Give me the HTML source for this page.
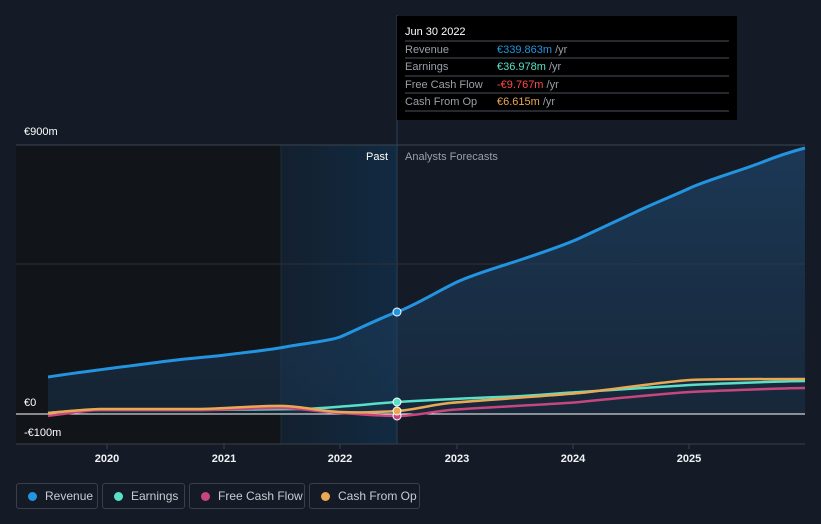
<!DOCTYPE html>
<html><head><style>
body{margin:0;background:#151b26;width:821px;height:524px;overflow:hidden;font-family:"Liberation Sans",sans-serif}
.lg{position:absolute;top:483px;height:26px;border:1px solid #3a404a;border-radius:3px;box-sizing:border-box;color:#c8ccd2;font-size:12px;line-height:24px}
.lg i{position:absolute;left:11px;top:8px;width:9px;height:9px;border-radius:50%}
.lg span{position:absolute;left:28px}
</style></head><body>
<svg width="821" height="524" style="position:absolute;left:0;top:0">
<defs>
<linearGradient id="hl" x1="0" x2="1"><stop offset="0" stop-color="#13202e"/><stop offset="1" stop-color="#122a42"/></linearGradient>
<linearGradient id="fa" x1="0" y1="0" x2="0" y2="1"><stop offset="0" stop-color="#1e4266" stop-opacity="0.75"/><stop offset="1" stop-color="#1b3a58" stop-opacity="0.4"/></linearGradient>
</defs>
<rect x="16" y="145" width="265" height="299" fill="#111419"/>
<rect x="281" y="145" width="116" height="299" fill="url(#hl)"/>
<line x1="281" y1="145" x2="281" y2="444" stroke="#1f2c3a"/>
<line x1="397" y1="15" x2="397" y2="444" stroke="#2a3f55"/>
<line x1="16" y1="145" x2="805" y2="145" stroke="#3a4452"/>
<line x1="16" y1="264" x2="805" y2="264" stroke="#2a323d"/>
<path d="M48,377 C80,372 130,366 160,362 S210,357 225,355 S270,350 285,347 S330,341 340,337 S380,318 397,312 S440,290 457,282 S505,265 520,260 S565,245 580,238 S625,217 640,210 S675,195 690,188 S745,169 760,163 S790,152 805,148 L805,414 L48,414Z" fill="url(#fa)"/>
<path d="M48,377 C80,372 130,366 160,362 S210,357 225,355 S270,350 285,347 S330,341 340,337 S380,318 397,312 S440,290 457,282 S505,265 520,260 S565,245 580,238 S625,217 640,210 S675,195 690,188 S745,169 760,163 S790,152 805,148" fill="none" stroke="#2394e0" stroke-width="3"/>
<line x1="16" y1="414" x2="805" y2="414" stroke="#ffffff" stroke-width="1"/>
<line x1="16" y1="444" x2="805" y2="444" stroke="#3a404a"/>
<path d="M48,413 C70,411 90,410 100,410 S180,410 200,410 S280,409 300,409 S380,403 397,402 S470,398 500,397 S560,393 580,392 S670,386 690,385 S790,381 805,381" fill="none" stroke="#5ae0c8" stroke-width="2.5"/>
<path d="M48,416 C70,413 90,410 100,410 S180,410 200,410 S260,408 280,408 S320,412 340,413 S380,416 397,416 S430,412 450,410 S560,404 580,402 S670,393 690,392 S790,388 805,388" fill="none" stroke="#c8467e" stroke-width="2.5"/>
<path d="M48,413 C70,411 90,409 100,409 S180,409 200,409 S265,405 285,406 S320,411 340,412 S380,412 397,411 S430,405 450,403 S560,395 580,393 S670,381 690,380 S790,379 805,379" fill="none" stroke="#e9a954" stroke-width="2.5"/>
<circle cx="397" cy="312" r="4" fill="#2394e0" stroke="#fff" stroke-width="1"/>
<circle cx="397" cy="402" r="4" fill="#5ae0c8" stroke="#fff" stroke-width="1"/>
<circle cx="397" cy="416" r="4" fill="#c8467e" stroke="#fff" stroke-width="1"/>
<circle cx="397" cy="411" r="4" fill="#e9a954" stroke="#fff" stroke-width="1"/>
<g font-size="11" fill="#ffffff">
<text x="24" y="135">€900m</text><text x="24" y="406">€0</text><text x="24" y="436">-€100m</text>
<text x="388" y="160" text-anchor="end">Past</text>
<text x="405" y="160" fill="#9aa0a8">Analysts Forecasts</text>
</g>
<g stroke="#3a404a"><line x1="107" y1="444" x2="107" y2="449"/><line x1="224" y1="444" x2="224" y2="449"/><line x1="340" y1="444" x2="340" y2="449"/><line x1="457" y1="444" x2="457" y2="449"/><line x1="573" y1="444" x2="573" y2="449"/><line x1="689" y1="444" x2="689" y2="449"/></g>
<g font-size="11" fill="#f0f2f5" text-anchor="middle" font-weight="bold">
<text x="107" y="462">2020</text><text x="224" y="462">2021</text><text x="340" y="462">2022</text><text x="457" y="462">2023</text><text x="573" y="462">2024</text><text x="689" y="462">2025</text>
</g>
<rect x="397" y="16" width="340" height="104" fill="#000"/>
<g font-size="11">
<text x="405" y="35" fill="#fff">Jun 30 2022</text>
<g stroke="#4a5058"><line x1="405" y1="41" x2="729" y2="41"/><line x1="405" y1="58" x2="729" y2="58"/><line x1="405" y1="76" x2="729" y2="76"/><line x1="405" y1="93" x2="729" y2="93"/><line x1="405" y1="111" x2="729" y2="111"/></g>
<text x="405" y="53" fill="#9aa0a8">Revenue</text><text x="497" y="53" fill="#2394e0">€339.863m <tspan fill="#9aa0a8">/yr</tspan></text>
<text x="405" y="70" fill="#9aa0a8">Earnings</text><text x="497" y="70" fill="#5ae0c8">€36.978m <tspan fill="#9aa0a8">/yr</tspan></text>
<text x="405" y="88" fill="#9aa0a8">Free Cash Flow</text><text x="497" y="88" fill="#ff4a4a">-€9.767m <tspan fill="#9aa0a8">/yr</tspan></text>
<text x="405" y="105" fill="#9aa0a8">Cash From Op</text><text x="497" y="105" fill="#e9a954">€6.615m <tspan fill="#9aa0a8">/yr</tspan></text>
</g>
</svg>
<div class="lg" style="left:16px;width:82px"><i style="background:#2394e0"></i><span>Revenue</span></div>
<div class="lg" style="left:102px;width:83px"><i style="background:#5ae0c8"></i><span>Earnings</span></div>
<div class="lg" style="left:189px;width:116px"><i style="background:#c8467e"></i><span>Free Cash Flow</span></div>
<div class="lg" style="left:309px;width:111px"><i style="background:#e9a954"></i><span>Cash From Op</span></div>
</body></html>
